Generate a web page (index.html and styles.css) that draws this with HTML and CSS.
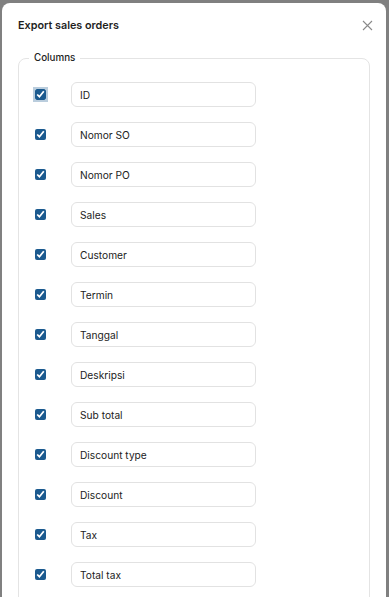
FILE: index.html
```html
<!DOCTYPE html>
<html lang="en">
<head>
    <meta charset="UTF-8">
    <title>Export sales orders</title>
    <link rel="stylesheet" href="styles.css">
</head>
<body>
    <!-- Modal export -->
    <div class="modal">
        <div class="modal-header">
            <h2>Export sales orders</h2>
            <span class="close">
                <svg width="11" height="11" viewBox="0 0 11 11"><path d="M1 1L10 10M10 1L1 10" stroke="#8a8a8a" stroke-width="1.1" fill="none"/></svg>
            </span>
        </div>

        <fieldset class="columns">
            <legend>Columns</legend>
            <div class="row"><input type="checkbox" class="focused" checked><input type="text" class="col-name" value="ID"></div>
            <div class="row"><input type="checkbox" checked><input type="text" class="col-name" value="Nomor SO"></div>
            <div class="row"><input type="checkbox" checked><input type="text" class="col-name" value="Nomor PO"></div>
            <div class="row"><input type="checkbox" checked><input type="text" class="col-name" value="Sales"></div>
            <div class="row"><input type="checkbox" checked><input type="text" class="col-name" value="Customer"></div>
            <div class="row"><input type="checkbox" checked><input type="text" class="col-name" value="Termin"></div>
            <div class="row"><input type="checkbox" checked><input type="text" class="col-name" value="Tanggal"></div>
            <div class="row"><input type="checkbox" checked><input type="text" class="col-name" value="Deskripsi"></div>
            <div class="row"><input type="checkbox" checked><input type="text" class="col-name" value="Sub total"></div>
            <div class="row"><input type="checkbox" checked><input type="text" class="col-name" value="Discount type"></div>
            <div class="row"><input type="checkbox" checked><input type="text" class="col-name" value="Discount"></div>
            <div class="row"><input type="checkbox" checked><input type="text" class="col-name" value="Tax"></div>
            <div class="row"><input type="checkbox" checked><input type="text" class="col-name" value="Total tax"></div>
            <div class="row"><input type="checkbox" checked><input type="text" class="col-name" value="Total"></div>
        </fieldset>
    </div>
</body>
</html>
```

FILE: styles.css
```css
/* Fundo escurecido */
body {
    margin: 0;
    height: 597px;
    overflow: hidden;
    background-color: #808080;
    font-family: Inter, "Liberation Sans", sans-serif;
    color: #222;
}
.modal {
    margin: 3px 3px 0 2px;
    padding: 13px 16px 0 16px;
    background-color: #fff;
    border-radius: 8px 8px 0 0;
    height: 700px;
}
.modal-header {
    display: flex;
    justify-content: space-between;
    align-items: flex-start;
}
.modal-header h2 {
    margin: 0;
    font-size: 10.8px;
    line-height: 20px;
    font-weight: 600;
    color: #1f1f1f;
}
.close {
    margin-right: -3px;
    margin-top: -1px;
    cursor: pointer;
}
.columns {
    margin: 15px 0 0 0;
    padding: 17px 16px 0 16px;
    border: 1px solid #e4e4e4;
    border-radius: 8px;
}
.columns legend {
    padding: 0 5px;
    margin-left: -6px;
    font-size: 9.8px;
    line-height: 14px;
    font-weight: 500;
    color: #222;
}
.row {
    display: flex;
    align-items: center;
    height: 25px;
    margin-bottom: 15px;
}
.row input[type="checkbox"] {
    width: 11px;
    height: 11px;
    margin: 0;
    accent-color: #1b5a8f;
}
.row input.focused {
    box-shadow: 0 0 0 2px rgba(27, 90, 143, 0.3);
    border-radius: 3px;
}
.col-name {
    box-sizing: border-box;
    margin-left: 25px;
    width: 185px;
    height: 25px;
    padding: 0 8px;
    border: 1px solid #e2e2e2;
    border-radius: 6px;
    font-family: Inter, "Liberation Sans", sans-serif;
    font-size: 10.2px;
    color: #222;
    outline: none;
}
```
